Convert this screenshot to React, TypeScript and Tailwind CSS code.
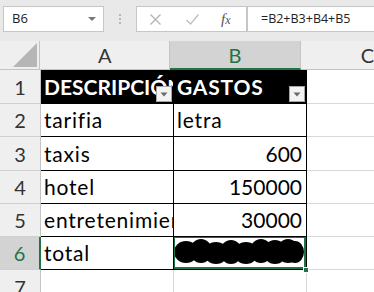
import React from 'react';

const ROWS = [
  { n: 1, h: 'h-[34px]', a: 'DESCRIPCIÓN', b: 'GASTOS', head: true },
  { n: 2, h: 'h-[33px]', a: 'tarifia', b: 'letra' },
  { n: 3, h: 'h-[34px]', a: 'taxis', b: '600', num: true },
  { n: 4, h: 'h-[33px]', a: 'hotel', b: '150000', num: true },
  { n: 5, h: 'h-[33px]', a: 'entretenimiento', b: '30000', num: true },
  { n: 6, h: 'h-[33px]', a: 'total', b: '', sel: true },
];

function FilterButton() {
  return (
    <div className="absolute right-[1px] bottom-[1px] w-[16px] h-[16px] bg-[#f3f3f3] border border-[#a6a6a6] flex items-center justify-center">
      <svg width="8" height="5" viewBox="0 0 8 5">
        <path d="M0.5 0.5 H7.5 L4 4.5 Z" fill="#6b6b6b" />
      </svg>
    </div>
  );
}

function Scribble() {
  const dots = [
    [12, 15, 12, 11], [27, 14, 11, 12], [42, 16, 12, 11], [57, 15, 11, 12], [72, 16, 12, 11],
    [87, 14, 11, 12], [101, 15, 12, 12], [114, 14, 11, 12], [121, 15, 9, 11],
  ];
  return (
    <svg className="absolute left-0 top-0" width="132" height="31" viewBox="0 0 132 31">
      {dots.map(([x, y, rx, ry], i) => (
        <ellipse key={i} cx={x} cy={y} rx={rx} ry={ry} fill="#000" />
      ))}
    </svg>
  );
}

export default function App() {
  return (
    <div className="w-[374px] h-[292px] overflow-hidden bg-white relative" style={{ fontFamily: 'Lato, "Liberation Sans", sans-serif' }}>
      {/* formula bar */}
      <div className="h-[41px] bg-[#e9e9e9] flex items-start pt-[6px] pl-[3px]">
        <div className="w-[101px] h-[26px] bg-white border border-[#c6c6c6] flex items-center justify-between pl-[8px] pr-[7px]">
          <span className="text-[13px] text-[#222]" style={{ fontFamily: '"Open Sans", sans-serif' }}>B6</span>
          <svg width="8" height="4" viewBox="0 0 8 4"><path d="M0 0 H8 L4 4 Z" fill="#777" /></svg>
        </div>
        <div className="w-[32px] h-[26px] flex flex-col items-center justify-center gap-[2px]">
          <span className="w-[2px] h-[2px] bg-[#b8b8b8]" />
          <span className="w-[2px] h-[2px] bg-[#b8b8b8]" />
          <span className="w-[2px] h-[2px] bg-[#b8b8b8]" />
        </div>
        <div className="w-[111px] h-[26px] bg-white border border-[#c6c6c6] flex items-center pl-[12px]">
          <svg width="13" height="13" viewBox="0 0 13 13" className="mr-[23px]">
            <path d="M1.5 1.5 L11.5 11.5 M11.5 1.5 L1.5 11.5" stroke="#b3b3b3" strokeWidth="1.3" />
          </svg>
          <svg width="15" height="13" viewBox="0 0 15 13" className="mr-[21px]">
            <path d="M1.5 7 L5.5 11 L13.5 1.5" stroke="#bfbfbf" strokeWidth="1.3" fill="none" />
          </svg>
          <span className="text-[15px] italic text-[#555]" style={{ fontFamily: '"Liberation Serif", serif' }}>f<span className="text-[12px]">x</span></span>
        </div>
        <div className="flex-1 h-[26px] bg-white border border-[#c6c6c6] border-r-0 flex items-center pl-[13px]">
          <span className="text-[12.5px] text-[#222]" style={{ fontFamily: '"Open Sans", sans-serif' }}>=B2+B3+B4+B5</span>
        </div>
      </div>

      {/* column headers */}
      <div className="flex h-[29px] bg-[#efefef]">
        <div className="w-[41px] h-full border-r border-b border-[#c4c4c4] flex items-end justify-end pr-[2px] pb-[2px]">
          <svg width="24" height="24" viewBox="0 0 24 24"><path d="M24 0 V24 H0 Z" fill="#b6b6b6" /></svg>
        </div>
        <div className="w-[133px] h-full border-r border-b border-[#c4c4c4] flex items-center justify-center text-[20px] text-[#333]">A</div>
        <div className="w-[133px] h-full bg-[#d3d3d3] border-r border-[#c4c4c4] border-b-2 border-b-[#217346] flex items-center justify-center text-[20px] text-[#217346]">B</div>
        <div className="flex-1 h-full border-b border-[#c4c4c4] pl-[60px] flex items-center text-[20px] text-[#333]">C</div>
      </div>

      {/* rows */}
      {ROWS.map(r => (
        <div key={r.n} className={`flex ${r.h}`}>
          <div className={`w-[41px] h-full border-b border-[#cfcfcf] flex items-center justify-center text-[20px] ${r.sel ? 'bg-[#d3d3d3] text-[#217346] border-r-2 border-r-[#217346]' : 'bg-[#efefef] text-[#333] border-r border-r-[#c4c4c4]'}`}>
            {r.n}
          </div>
          <div className={`w-[133px] h-full border-r border-b border-black overflow-hidden whitespace-nowrap flex items-center pl-[3px] relative ${r.head ? 'bg-black text-white font-bold text-[21px]' : 'text-black text-[21px] tracking-[0.8px]'}`}>
            {r.a}
            {r.head && <FilterButton />}
          </div>
          <div className={`w-[133px] h-full border-r border-b border-black overflow-hidden whitespace-nowrap flex items-center relative text-[21px] ${r.head ? 'bg-black text-white font-bold pl-[3px]' : 'text-black'} ${r.num ? 'justify-end pr-[4px]' : 'pl-[3px] tracking-[0.8px]'}`}>
            {r.b}
            {r.head && <FilterButton />}
            {r.sel && <Scribble />}
            {r.sel && <div className="absolute -left-[1px] -top-[1px] right-0 bottom-0 border-2 border-[#217346] pointer-events-none" />}
          </div>
          <div className="flex-1 h-full border-b border-[#d9d9d9]" />
        </div>
      ))}
      <div className="flex h-[33px]">
        <div className="w-[41px] h-full bg-[#efefef] border-r border-[#c4c4c4] flex items-center justify-center text-[20px] text-[#333]">7</div>
        <div className="w-[133px] h-full border-r border-[#d9d9d9]" />
        <div className="w-[133px] h-full border-r border-[#d9d9d9]" />
      </div>
      {/* fill handle */}
      <div className="absolute left-[303px] top-[267px] w-[6px] h-[6px] bg-[#217346] border border-white" />
    </div>
  );
}
